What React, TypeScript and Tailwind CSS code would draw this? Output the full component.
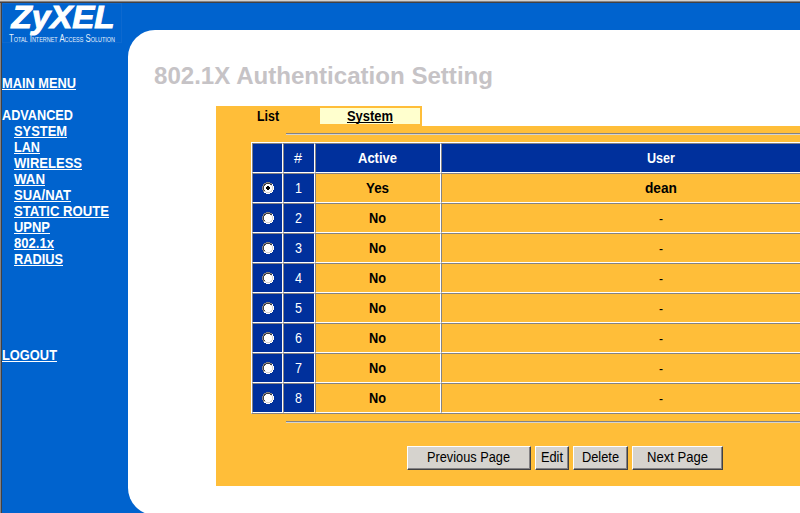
import React from "react";

const links = ["SYSTEM", "LAN", "WIRELESS", "WAN", "SUA/NAT", "STATIC ROUTE", "UPNP", "802.1x", "RADIUS"];
const linkWidths = [53, 26, 68, 31, 57, 95, 36, 40, 49];
const users = ["dean", "-", "-", "-", "-", "-", "-", "-"];

type LabelProps = { text: string; width: number; bold?: boolean; underline?: boolean };

/** One line of text set to an exact advance width. */
function Label({ text, width, bold = false, underline = false }: LabelProps) {
  return (
    <svg width={width} height={16} className="block shrink-0 overflow-visible" fill="currentColor">
      <text x={0} y={text === "-" ? 14 : 13} textLength={width} lengthAdjust="spacingAndGlyphs" fontSize={14} fontWeight={bold ? 700 : 400}>
        {text}
      </text>
      {underline && <rect x={0} y={14} width={width} height={1} />}
    </svg>
  );
}

function Radio({ checked }: { checked: boolean }) {
  return (
    <svg width="12" height="12" viewBox="0 0 12 12" shapeRendering="crispEdges">
      <path fill="#848284" d="M4 0h4v1H4zM2 1h2v1H2zM8 1h2v1H8zM1 2h1v2H1zM0 4h1v4H0zM1 8h1v2H1z" />
      <path fill="#424142" d="M4 1h4v1H4zM2 2h2v1H2zM8 2h2v1H8zM2 3h1v1H2zM1 4h1v4H1zM2 8h1v1H2z" />
      <path fill="#fff" d="M4 2h4v1h1v1h1v4h-1v1h-1v1H4V9H3V8H2V4h1V3h1zM10 2h1v2h-1zM11 4h1v4h-1zM10 8h1v2h-1zM8 10h2v1H8zM4 11h4v1H4zM2 10h2v1H2z" />
      <path fill="#d6d3ce" d="M10 4h1v4h-1zM9 8h1v1H9zM8 9h2v1H8zM4 10h4v1H4zM2 9h2v1H2zM9 3h1v1H9z" />
      {checked && <path fill="#000" d="M5 4h2v1h1v2H7v1H5V7H4V5h1z" />}
    </svg>
  );
}

const cell = "flex shrink-0 items-center justify-center border border-t-[#848284] border-l-[#848284] border-b-white border-r-white";

function Button({ text, width, frame }: { text: string; width: number; frame: string }) {
  return (
    <button className={`flex h-6 items-center justify-center border border-t-white border-l-white border-r-[#424142] border-b-[#424142] bg-[#d6d3ce] pr-px pb-0.5 shadow-[inset_-1px_-1px_0_#848284] ${frame}`}>
      <Label text={text} width={width} />
    </button>
  );
}

export default function App() {
  return (
    <div className="flex h-[513px] w-[800px] flex-col overflow-hidden border-t border-[#d6d3ce] bg-[#0063ce] font-['Liberation_Sans',Arial,sans-serif] text-[14px] leading-4">
      <div className="h-px shrink-0 bg-[#848284]" />
      <div className="h-px shrink-0 bg-[#424142]" />
      <div className="flex h-[510px] border-l border-[#848284]">
        <nav className="w-[127px] shrink-0 border-l border-[#424142] text-white">
          <svg width="121" height="40" className="block overflow-visible" fill="white">
            <rect x="0.5" y="0.5" width="119" height="39" fill="none" stroke="#0d69cf" />
            <text x="9.5" y="24.5" textLength="103" lengthAdjust="spacingAndGlyphs" fontSize="31" fontWeight="700" fontStyle="italic" stroke="white" strokeWidth="1">ZyXEL</text>
            <text x="7" y="39" textLength="106" lengthAdjust="spacingAndGlyphs" fontSize="10" fill="#e6f1fc" style={{ fontVariant: "small-caps" }}>Total Internet Access Solution</text>
          </svg>
          <div className="pt-8"><Label text="MAIN MENU" width={74} bold underline /></div>
          <div className="pt-4"><Label text="ADVANCED" width={71} bold /></div>
          <div className="flex flex-col pl-3">
            {links.map((t, i) => <Label key={t} text={t} width={linkWidths[i]} bold underline />)}
          </div>
          <div className="pt-20"><Label text="LOGOUT" width={55} bold underline /></div>
        </nav>
        <main className="mt-[27px] h-[485px] w-[672px] shrink-0 rounded-l-[27px] bg-white">
          <h1 className="flex h-[76px] pl-[26px] pt-[33px] text-[#c6c3c6]">
            <svg width="340" height="30" className="block overflow-visible" fill="currentColor">
              <text x="0" y="21" fontSize="24" fontWeight="700" textLength="339" lengthAdjust="spacingAndGlyphs">802.1X Authentication Setting</text>
            </svg>
          </h1>
          <div className="ml-[88px] flex h-5 w-[206px] bg-[#ffbe39]">
            <div className="flex w-[104px] justify-center pt-0.5"><Label text="List" width={22} bold /></div>
            <div className="mt-0.5 flex h-4 w-[100px] justify-center bg-[#ffffce]"><Label text="System" width={46} bold underline /></div>
          </div>
          <section className="ml-[88px] h-[360px] overflow-hidden bg-[#ffbe39] pt-[7px]">
            <div className="ml-[70px] h-0.5 border-t border-[#848284] bg-[#d6d3ce]" />
            <div className="ml-[35px] mt-[7px] w-[632px] border border-b-[#848284] border-l-white border-r-white border-t-white">
              <div className="flex h-[30px] text-white">
                <div className={`${cell} w-[31px] bg-[#00309c]`} />
                <div className={`${cell} w-8 bg-[#00309c] pr-0.5`}><Label text="#" width={8} /></div>
                <div className={`${cell} w-[126px] bg-[#00309c] pr-0.5`}><Label text="Active" width={39} bold /></div>
                <div className={`${cell} w-[441px] bg-[#00309c] pr-0.5`}><Label text="User" width={28} bold /></div>
              </div>
              {users.map((user, i) => (
                <div key={i} className="flex h-[30px]">
                  <div className={`${cell} w-[31px] bg-[#00309c]`}><Radio checked={i === 0} /></div>
                  <div className={`${cell} w-8 bg-[#00309c] pr-0.5 text-white`}><Label text={String(i + 1)} width={7} /></div>
                  <div className={`${cell} w-[126px] pr-px`}><Label text={i === 0 ? "Yes" : "No"} width={i === 0 ? 23 : 17} bold /></div>
                  <div className={`${cell} w-[441px] pr-px`}><Label text={user} width={i === 0 ? 32 : 4} bold={i === 0} /></div>
                </div>
              ))}
            </div>
            <div className="ml-[70px] mt-[7px] h-0.5 border-t border-[#848284] bg-[#d6d3ce]" />
            <div className="ml-[191px] mt-[23px] flex gap-1">
              <Button text="Previous Page" width={83} frame="w-[124px]" />
              <Button text="Edit" width={22} frame="w-[34px]" />
              <Button text="Delete" width={37} frame="w-[55px]" />
              <Button text="Next Page" width={61} frame="w-[91px]" />
            </div>
          </section>
        </main>
      </div>
    </div>
  );
}
